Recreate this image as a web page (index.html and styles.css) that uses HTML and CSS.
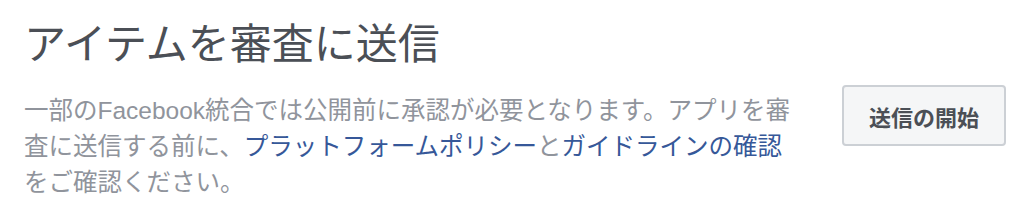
FILE: index.html
```html
<!DOCTYPE html>
<html lang="ja">
<head>
    <meta charset="UTF-8">
    <title>アイテムを審査に送信</title>
    <link rel="stylesheet" href="styles.css">
</head>
<body>
    <div class="review">
        <h1 class="review-title">アイテムを審査に送信</h1>
        <div class="review-row">
            <p class="review-text">一部のFacebook統合では公開前に承認が必要となります。アプリを審査に送信する前に、<a href="#">プラットフォームポリシー</a>と<a href="#">ガイドラインの確認</a>をご確認ください。</p>
            <button class="review-button">送信の開始</button>
        </div>
    </div>
</body>
</html>
```

FILE: styles.css
```css
body {
    margin: 0;
    background-color: #fff;
    font-family: "Liberation Sans", "Noto Sans CJK JP", sans-serif;
}
.review {
    padding: 18px 18px 0 24px;
}
.review-title {
    margin: 0;
    font-size: 42px;
    font-weight: normal;
    line-height: 54px;
    color: #4b4f56;
}
.review-row {
    display: flex;
    justify-content: space-between;
    align-items: flex-start;
    margin-top: 13px;
}
.review-text {
    width: 776px;
    margin: 0;
    padding-top: 8px;
    font-size: 24.5px;
    line-height: 36px;
    color: #90949c;
}
.review-text a {
    color: #365899;
    text-decoration: none;
}
.review-button {
    width: 164px;
    height: 61px;
    background-color: #f5f6f7;
    border: 2px solid #ccd0d5;
    border-radius: 4px;
    font-family: inherit;
    font-size: 22px;
    font-weight: bold;
    color: #4b4f56;
    cursor: pointer;
}
```
